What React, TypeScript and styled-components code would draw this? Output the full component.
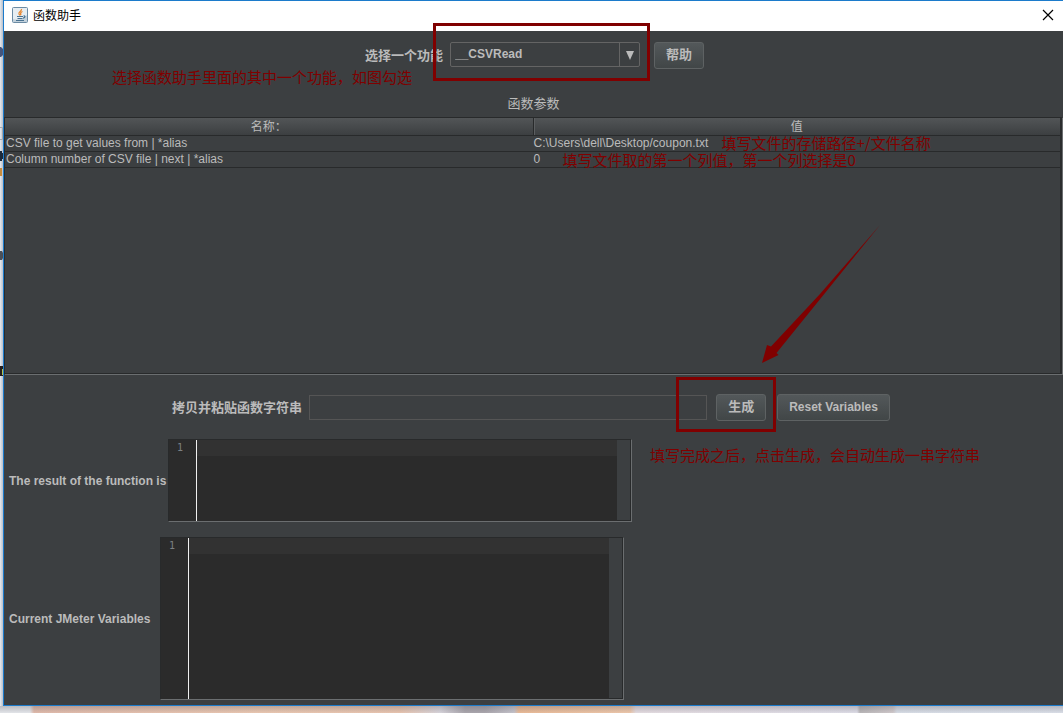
import React from "react";
import styled, { createGlobalStyle } from "styled-components";

const ui = `"Liberation Sans", "Noto Sans CJK SC", sans-serif`;
const cjk = `"Noto Sans CJK SC", sans-serif`;
const mark = "#800000";

const GlobalStyle = createGlobalStyle`
  *, *::before, *::after { box-sizing: border-box; }
  body { margin: 0; background: #dde0e6; font-family: ${ui}; }
`;

const Desktop = styled.div`
  position: relative;
  min-height: 100vh;
  display: flex;
  flex-direction: column;
  padding: 0 0 7px 3px;
  overflow: hidden;
  background:
    linear-gradient(180deg, rgba(70, 70, 80, 0.25), rgba(70, 70, 80, 0)) 0 100% / 100% 7px no-repeat,
    linear-gradient(90deg, #e2e4e8 0 30px, #deb9aa 34px, #e8c6b0 260px, #e6c3ae 400px, #d6d3da 440px, #a9a5ac 465px, #a9a5ac 485px, #c4c2ca 514px, #e8b996 519px, #ebc6aa 630px, #e2dadf 636px, #dcdbe5 857px, #b9b6b8 860px, #cfc8ca 893px, #d6dbe4 897px, #d9dde6 100%) 0 100% / 100% 7px no-repeat,
    linear-gradient(90deg, #e6eaef, #b9bfc9) 0 0 / 3px 100% no-repeat;
`;

const DesktopEdge = styled.svg`
  position: absolute;
  left: 0;
  top: 0;
`;

const Window = styled.main`
  flex: 1;
  display: flex;
  flex-direction: column;
  border: 1px solid #1c7bcb;
  border-right: 0;
  background: #3c3f41;
  color: #bbbbbb;
`;

const TitleBar = styled.header`
  height: 30px;
  display: flex;
  align-items: center;
  gap: 5px;
  padding: 0 8px 2px;
  background: #ffffff;
  color: #000000;
`;

const Title = styled.h1`
  flex: 1;
  margin: 0;
  font: 400 12px/16px ${cjk};
`;

const CloseButton = styled.button`
  display: flex;
  padding: 0;
  border: 0;
  background: none;
`;

const Chooser = styled.section`
  position: relative;
  display: flex;
  justify-content: center;
  align-items: center;
  gap: 7px;
  padding: 11px 0 0 2px;
`;

const Label = styled.label<{ $size?: number; $width?: number }>`
  width: ${(p) => (p.$width ? `${p.$width}px` : "auto")};
  font: 700 ${(p) => p.$size ?? 12}px/16px ${ui};
  white-space: nowrap;
`;

const ComboWrap = styled.div`
  position: relative;
  display: flex;
  align-self: flex-start;
  margin-right: 7px;
`;

const Combo = styled.select`
  appearance: none;
  width: 190px;
  height: 25px;
  padding: 0 24px 2px 4px;
  border: 1px solid #646464;
  border-radius: 2px;
  background: #3c3f41;
  color: #bbbbbb;
  font: 700 12px/16px ${ui};
`;

const ComboArrow = styled.svg`
  position: absolute;
  right: 0;
  top: 0;
  pointer-events: none;
`;

const Frame = styled.div<{ $inset: string }>`
  position: absolute;
  z-index: 1;
  inset: ${(p) => p.$inset};
  border: 3px solid ${mark};
  pointer-events: none;
`;

const Button = styled.button<{ $size?: number }>`
  height: 27px;
  padding: 0 11px 1px;
  border: 1px solid #5e6263;
  border-radius: 3px;
  background: linear-gradient(#53585a, #414647);
  color: #bbbbbb;
  font: 700 ${(p) => p.$size ?? 12}px/16px ${ui};
  white-space: nowrap;
`;

const Note = styled.span<{ $left: string; $top: string }>`
  position: absolute;
  z-index: 1;
  left: ${(p) => p.$left};
  top: ${(p) => p.$top};
  color: ${mark};
  font: 400 15px/16px ${cjk};
  white-space: nowrap;
`;

const Heading = styled.h2`
  margin: 26px 0 4px;
  text-align: center;
  font: 400 13px/18px ${ui};
`;

const TablePane = styled.section`
  position: relative;
  height: 257px;
  border: 1px solid #282a2b;
  border-right: 2px solid #2b2d2e;
  box-shadow: 1px 1px 0 #6b6e70;
  margin: 0 1px 1px 0;
`;

const Table = styled.table`
  width: 100%;
  table-layout: fixed;
  border-collapse: separate;
  border-spacing: 0;
  font: 400 12px/15px ${ui};
`;

const HeaderCell = styled.th`
  height: 18px;
  padding: 2px 0 0;
  border-bottom: 1px solid #282a2b;
  background: linear-gradient(#525557, #3c3f41);
  font: 400 12px/15px ${ui};

  & + & {
    border-left: 1px solid #282a2b;
    box-shadow: inset 1px 0 0 #5c5f61;
  }
`;

const Cell = styled.td`
  position: relative;
  height: 16px;
  padding: 0 1px;
  border-bottom: 1px solid #282a2b;
  white-space: nowrap;
`;

const Pointer = styled.svg`
  position: absolute;
  right: 178px;
  top: 106px;
`;

const Output = styled.section`
  position: relative;
  display: flex;
  flex-direction: column;
  padding: 19px 0 5px;
`;

const CopyRow = styled.div`
  display: flex;
  justify-content: center;
  align-items: center;
  gap: 7px;
  padding-right: 5px;
`;

const CopyInput = styled.input`
  width: 398px;
  height: 25px;
  margin-right: 2px;
  padding: 0 6px;
  border: 1px solid #555555;
  background: #3c3f41;
  color: #bbbbbb;
  font: 400 12px/16px ${ui};
`;

const Generate = styled.div`
  position: relative;
  display: flex;
  margin-right: 4px;
`;

const EditorRow = styled.div<{ $top: number }>`
  display: flex;
  align-items: center;
  gap: 2px;
  margin-top: ${(p) => p.$top}px;
  padding-left: 5px;
`;

const Editor = styled.div<{ $height: number }>`
  display: grid;
  grid-template-columns: 27px 421px 14px;
  width: 464px;
  height: ${(p) => p.$height}px;
  border: 1px solid #282a2b;
  border-right-color: #6b6e70;
  border-bottom-color: #6b6e70;
  background: #3c3f41;
`;

const Gutter = styled.div`
  padding-right: 13px;
  background: #2b2b2b;
  color: #7c8082;
  text-align: right;
  font: 400 10px/16px "DejaVu Sans Mono", monospace;
`;

const Code = styled.textarea`
  display: block;
  height: 100%;
  padding: 0 4px;
  border: 0;
  border-left: 1px solid #f0f0f0;
  border-radius: 0;
  resize: none;
  overflow: hidden;
  background: linear-gradient(#323232 0 16px, #2b2b2b 16px);
  color: #a9b7c6;
  font: 400 12px/16px "Liberation Mono", monospace;
`;

const Scroll = styled.div`
  border-right: 1px solid #282a2b;
  border-bottom: 1px solid #282a2b;
`;

const rows = [
  {
    name: "CSV file to get values from | *alias",
    value: "C:\\Users\\dell\\Desktop/coupon.txt",
    note: "填写文件的存储路径+/文件名称",
    left: "189px",
    top: "-1px",
  },
  {
    name: "Column number of CSV file | next | *alias",
    value: "0",
    note: "填写文件取的第一个列值，第一个列选择是0",
    left: "30px",
    top: "0",
  },
];

function JavaIcon() {
  return (
    <svg width="16" height="16" viewBox="0 0 16 16" aria-hidden="true">
      <rect x=".5" y=".5" width="15" height="15" rx="1" fill="#e6edf2" stroke="#6b8ba4" />
      <path d="M1 15h14V8Q9 14 1 12z" fill="#c2d1dc" />
      <path d="M9.500 2C10 4 6 5 7 7l1 1.500M10.500 4.500C8 5.500 8.500 7 9 8.200" fill="none" stroke="#e8862e" strokeWidth="1.300" />
      <path d="M5 9.500h6M5.500 11.500h5M11.500 9c2-.5 2 1.500-.5 2.300M4 13.500h8" fill="none" stroke="#4a7291" strokeWidth="1.200" />
    </svg>
  );
}

function CodeBox({ id, height }: { id: string; height: number }) {
  return (
    <Editor $height={height}>
      <Gutter>1</Gutter>
      <Code id={id} spellCheck={false} />
      <Scroll />
    </Editor>
  );
}

export default function App() {
  return (
    <>
      <GlobalStyle />
      <Desktop>
        <DesktopEdge width="3" height="400" aria-hidden="true">
          <path d="M0 47h1l2 2v6l-2 2H0z" fill="#44557c" />
          <path d="M0 127.500h2.500v12H0" fill="none" stroke="#a4a6aa" />
          <path d="M0 151h2v2h1v6H2v2H0z" fill="#1d2b3c" />
          <path d="M0 168h2v8H0z" fill="#c58b3d" />
          <path d="M0 251h2l1 2v5l-1 2H0z" fill="#4b5058" />
          <path d="M0 366h3v10H0z" fill="#251e1c" />
          <path d="M2 369h1v6H2z" fill="#b4c44d" />
        </DesktopEdge>
        <Window>
          <TitleBar>
            <JavaIcon />
            <Title>函数助手</Title>
            <CloseButton aria-label="关闭">
              <svg width="14" height="14" viewBox="0 0 14 14">
                <path d="M2 2l10 10M12 2L2 12" stroke="#000" strokeWidth="1.200" />
              </svg>
            </CloseButton>
          </TitleBar>

          <Chooser>
            <Label $size={13} htmlFor="fn">选择一个功能</Label>
            <ComboWrap>
              <Combo id="fn" defaultValue="__CSVRead">
                <option>__CSVRead</option>
              </Combo>
              <ComboArrow width="21" height="25" aria-hidden="true">
                <path d="M.5 1v23" stroke="#646464" />
                <path d="M7 9h8l-4 9z" fill="#bbbbbb" />
              </ComboArrow>
              <Frame $inset="-19px -10px -14px -17px" />
            </ComboWrap>
            <Button $size={13}>帮助</Button>
            <Note $left="108px" $top="38px">选择函数助手里面的其中一个功能，如图勾选</Note>
          </Chooser>

          <Heading>函数参数</Heading>

          <TablePane>
            <Table>
              <thead>
                <tr>
                  <HeaderCell>名称：</HeaderCell>
                  <HeaderCell>值</HeaderCell>
                </tr>
              </thead>
              <tbody>
                {rows.map((r) => (
                  <tr key={r.name}>
                    <Cell>{r.name}</Cell>
                    <Cell>
                      {r.value}
                      <Note $left={r.left} $top={r.top}>{r.note}</Note>
                    </Cell>
                  </tr>
                ))}
              </tbody>
            </Table>
            <Pointer width="122" height="142" viewBox="0 0 122 142" aria-hidden="true">
              <path d="M120 1L16.500 129l2 2L2 139 7 121l4 1.500L60 70z" fill={mark} />
            </Pointer>
          </TablePane>

          <Output>
            <CopyRow>
              <Label $size={13} htmlFor="copy">拷贝并粘贴函数字符串</Label>
              <CopyInput id="copy" />
              <Generate>
                <Button $size={13}>生成</Button>
                <Frame $inset="-17px -10px -11px -40px" />
              </Generate>
              <Button>Reset Variables</Button>
            </CopyRow>
            <Note $left="646px" $top="72px">填写完成之后，点击生成，会自动生成一串字符串</Note>
            <EditorRow $top={18}>
              <Label $width={157} htmlFor="result">The result of the function is</Label>
              <CodeBox id="result" height={83} />
            </EditorRow>
            <EditorRow $top={15}>
              <Label $width={149} htmlFor="vars">Current JMeter Variables</Label>
              <CodeBox id="vars" height={163} />
            </EditorRow>
          </Output>
        </Window>
      </Desktop>
    </>
  );
}
